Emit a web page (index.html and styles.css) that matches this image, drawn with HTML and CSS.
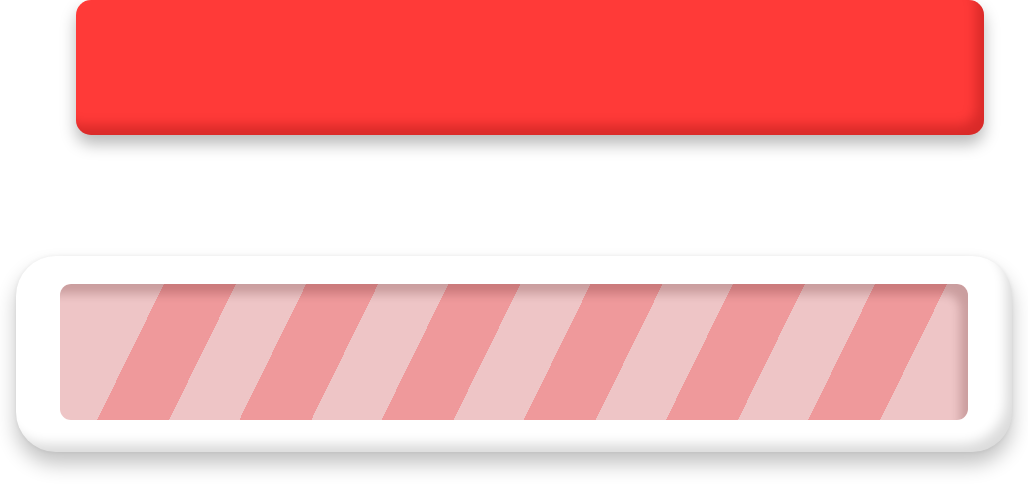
FILE: index.html
```html
<!DOCTYPE html>
<html>
<head>
<meta charset="utf-8">
<link rel="stylesheet" href="styles.css">
</head>
<body>
<div class="page">
  <div class="bar"></div>
  <div class="shell">
    <div class="track"></div>
  </div>
</div>
</body>
</html>
```
FILE: styles.css
```css
html, body {
  margin: 0;
  padding: 0;
  background: #ffffff;
  font-family: "Liberation Sans", Arial, sans-serif;
}
.page {
  width: 1028px;
  height: 484px;
  display: flex;
  flex-direction: column;
  overflow: hidden;
}
.bar {
  margin-left: 76px;
  width: 908px;
  height: 135px;
  border-radius: 15px;
  background: #ff3a38;
  box-shadow:
    inset -10px -12px 12px -2px rgba(120, 0, 0, 0.28),
    0 9px 16px rgba(0, 0, 0, 0.28);
  flex: none;
}
.shell {
  margin-top: 121px;
  margin-left: 16px;
  width: 996px;
  height: 196px;
  box-sizing: border-box;
  padding: 28px 44px 32px 44px;
  border-radius: 40px;
  background: #ffffff;
  box-shadow:
    inset -10px -12px 12px -4px rgba(0, 0, 0, 0.14),
    0 12px 20px rgba(0, 0, 0, 0.24),
    0 0 4px rgba(0, 0, 0, 0.06);
  flex: none;
}
.track {
  height: 136px;
  border-radius: 11px;
  background-color: #eec5c6;
  background-image: linear-gradient(116.2deg,
    transparent 0 93.3px,
    #ef999b 93.3px 157.9px,
    transparent 157.9px 220.9px,
    #ef999b 220.9px 285.5px,
    transparent 285.5px 348.5px,
    #ef999b 348.5px 413.1px,
    transparent 413.1px 476.1px,
    #ef999b 476.1px 540.7px,
    transparent 540.7px 603.7px,
    #ef999b 603.7px 668.3px,
    transparent 668.3px 731.3px,
    #ef999b 731.3px 795.9px,
    transparent 795.9px);
  box-shadow: inset -12px 14px 10px -4px rgba(60, 0, 0, 0.2);
}
```
